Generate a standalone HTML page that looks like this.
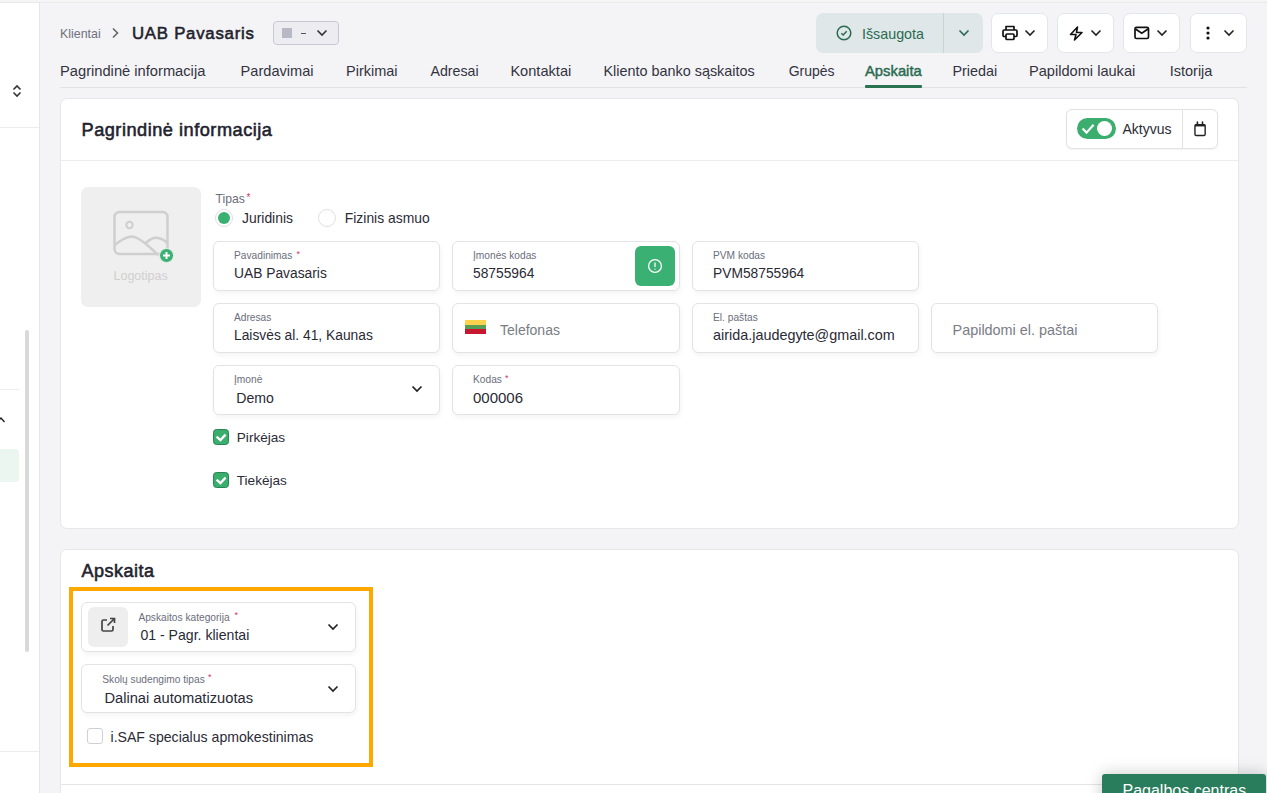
<!DOCTYPE html>
<html><head><meta charset="utf-8"><style>
*{margin:0;padding:0;box-sizing:border-box}
html,body{width:1267px;height:793px;overflow:hidden;background:#f4f4f6;font-family:"Liberation Sans",sans-serif}
.t{position:absolute;white-space:nowrap;line-height:1}
.b{position:absolute}
svg{position:absolute;overflow:visible}
</style></head><body>
<div class="b" style="left:0px;top:0px;width:1267px;height:2px;background:#f5f5f5"></div>
<div class="b" style="left:0px;top:2px;width:1267px;height:1px;background:#e9e9e9"></div>
<div class="b" style="left:0px;top:3px;width:39px;height:790px;background:#fff"></div>
<div class="b" style="left:39px;top:3px;width:1px;height:790px;background:#e6e6ea"></div>
<div class="b" style="left:0px;top:127px;width:39px;height:1px;background:#ececee"></div>
<div class="b" style="left:0px;top:389px;width:19px;height:1px;background:#ececee"></div>
<div class="b" style="left:0px;top:751px;width:39px;height:1px;background:#ececee"></div>
<div class="b" style="left:25px;top:330px;width:4px;height:322px;background:#d9d9d9;border-radius:2px"></div>
<div class="b" style="left:0px;top:449px;width:19px;height:33px;background:#ebf6f0;border-radius:0 4px 4px 0"></div>
<svg style="left:12px;top:84px" width="10" height="14" viewBox="0 0 10 14"><path d="M1.5 5.5 L5 2 L8.5 5.5 M1.5 8.5 L5 12 L8.5 8.5" fill="none" stroke="#333" stroke-width="1.6"/></svg>
<svg style="left:-2px;top:416px" width="8" height="8" viewBox="0 0 8 8"><path d="M0 5 L3 2 L6.5 6" fill="none" stroke="#222" stroke-width="1.4"/></svg>
<div class="t" style="left:60.0px;top:27.50px;font-size:12.4px;color:#6f7180;">Klientai</div>
<svg style="left:111px;top:27px" width="9" height="12" viewBox="0 0 9 12"><path d="M2 1.5 L6.5 6 L2 10.5" fill="none" stroke="#666" stroke-width="1.6"/></svg>
<div class="t" style="left:132.0px;top:26.38px;font-size:16.8px;color:#22222d;-webkit-text-stroke:0.55px #22222d;letter-spacing:0.75px;">UAB Pavasaris</div>
<div class="b" style="left:273px;top:21px;width:66px;height:24px;background:#ededf1;border:1px solid #c9c9d3;border-radius:4px"></div>
<div class="b" style="left:282px;top:28px;width:10px;height:10px;background:#b9b9c6"></div>
<div class="b" style="left:301px;top:32.6px;width:5px;height:1.3px;background:#555"></div>
<svg style="left:316px;top:29px" width="12" height="8" viewBox="0 0 12 8"><path d="M1.5 1.5 L6 6 L10.5 1.5" fill="none" stroke="#333" stroke-width="1.6"/></svg>
<div class="b" style="left:816px;top:13px;width:167px;height:40px;background:#dfe7e8;border-radius:7px"></div>
<div class="b" style="left:943px;top:13px;width:1px;height:40px;background:#c3d8cf"></div>
<svg style="left:836px;top:25px" width="16" height="16" viewBox="0 0 16 16"><circle cx="8" cy="8" r="6.8" fill="none" stroke="#2a6b50" stroke-width="1.5"/><path d="M5.3 8.2 L7.2 10 L10.7 6.3" fill="none" stroke="#2a6b50" stroke-width="1.5"/></svg>
<div class="t" style="left:862.0px;top:27.00px;font-size:14.3px;color:#2a6b50;">Išsaugota</div>
<svg style="left:958px;top:29px" width="12" height="8" viewBox="0 0 12 8"><path d="M1.5 1.5 L6 6 L10.5 1.5" fill="none" stroke="#2a6b50" stroke-width="1.6"/></svg>
<div class="b" style="left:991px;top:13px;width:57px;height:40px;background:#fff;border:1px solid #e4e6ee;border-radius:7px"></div>
<svg style="left:1024px;top:29px" width="12" height="8" viewBox="0 0 12 8"><path d="M1.5 1.5 L6 6 L10.5 1.5" fill="none" stroke="#222" stroke-width="1.6"/></svg>
<div class="b" style="left:1057px;top:13px;width:57px;height:40px;background:#fff;border:1px solid #e4e6ee;border-radius:7px"></div>
<svg style="left:1090px;top:29px" width="12" height="8" viewBox="0 0 12 8"><path d="M1.5 1.5 L6 6 L10.5 1.5" fill="none" stroke="#222" stroke-width="1.6"/></svg>
<div class="b" style="left:1123px;top:13px;width:57px;height:40px;background:#fff;border:1px solid #e4e6ee;border-radius:7px"></div>
<svg style="left:1156px;top:29px" width="12" height="8" viewBox="0 0 12 8"><path d="M1.5 1.5 L6 6 L10.5 1.5" fill="none" stroke="#222" stroke-width="1.6"/></svg>
<div class="b" style="left:1190px;top:13px;width:57px;height:40px;background:#fff;border:1px solid #e4e6ee;border-radius:7px"></div>
<svg style="left:1223px;top:29px" width="12" height="8" viewBox="0 0 12 8"><path d="M1.5 1.5 L6 6 L10.5 1.5" fill="none" stroke="#222" stroke-width="1.6"/></svg>
<svg style="left:1002px;top:25px" width="16" height="16" viewBox="0 0 16 16"><path d="M4 5 V1.5 H12 V5 M4 11.5 H2.2 Q1 11.5 1 10.3 V6.2 Q1 5 2.2 5 H13.8 Q15 5 15 6.2 V10.3 Q15 11.5 13.8 11.5 H12" fill="none" stroke="#111" stroke-width="1.7" stroke-linejoin="round"/><rect x="4" y="9" width="8" height="5.5" rx="1" fill="none" stroke="#111" stroke-width="1.7"/></svg>
<svg style="left:1069px;top:26px" width="15" height="15" viewBox="0 0 15 15"><path d="M8.5 1 L1.5 8.5 H7 L5.5 14 L13 6.5 H7.5 Z" fill="none" stroke="#111" stroke-width="1.6" stroke-linejoin="round"/></svg>
<svg style="left:1134px;top:26px" width="16" height="14" viewBox="0 0 16 14"><rect x="1" y="1.3" width="13.5" height="11.2" rx="1.5" fill="none" stroke="#111" stroke-width="1.7"/><path d="M1.5 3 L7.75 7.3 L14 3" fill="none" stroke="#111" stroke-width="1.7"/></svg>
<svg style="left:1206px;top:26px" width="4" height="14" viewBox="0 0 4 14"><circle cx="2" cy="2" r="1.6" fill="#111"/><circle cx="2" cy="7" r="1.6" fill="#111"/><circle cx="2" cy="12" r="1.6" fill="#111"/></svg>
<div class="t" style="left:60.0px;top:63.86px;font-size:14.7px;color:#33333f;">Pagrindinė informacija</div>
<div class="t" style="left:240.6px;top:63.94px;font-size:14.6px;color:#33333f;">Pardavimai</div>
<div class="t" style="left:346.0px;top:64.03px;font-size:14.5px;color:#33333f;">Pirkimai</div>
<div class="t" style="left:430.5px;top:64.28px;font-size:14.2px;color:#33333f;">Adresai</div>
<div class="t" style="left:510.4px;top:63.94px;font-size:14.6px;color:#33333f;">Kontaktai</div>
<div class="t" style="left:603.5px;top:64.11px;font-size:14.4px;color:#33333f;">Kliento banko sąskaitos</div>
<div class="t" style="left:788.7px;top:64.45px;font-size:14px;color:#33333f;">Grupės</div>
<div class="t" style="left:952.4px;top:64.11px;font-size:14.4px;color:#33333f;">Priedai</div>
<div class="t" style="left:1029.0px;top:63.94px;font-size:14.6px;color:#33333f;">Papildomi laukai</div>
<div class="t" style="left:1169.7px;top:64.03px;font-size:14.5px;color:#33333f;">Istorija</div>
<div class="t" style="left:865.0px;top:63.77px;font-size:14.8px;color:#2a6b50;-webkit-text-stroke:0.45px #2a6b50;">Apskaita</div>
<div class="b" style="left:60px;top:87px;width:1187px;height:1px;background:#e2e2e6"></div>
<div class="b" style="left:865px;top:85px;width:57px;height:3px;background:#2a7350;border-radius:1px"></div>
<div class="b" style="left:60px;top:98px;width:1179px;height:431px;background:#fff;border:1px solid #e7e7eb;border-radius:7px"></div>
<div class="b" style="left:61px;top:160px;width:1177px;height:1px;background:#ececef"></div>
<div class="t" style="left:81.5px;top:120.59px;font-size:18.2px;color:#22222d;-webkit-text-stroke:0.55px #22222d;letter-spacing:0.5px;">Pagrindinė informacija</div>
<div class="b" style="left:1066px;top:109px;width:152px;height:40px;background:#fff;border:1px solid #e2e2e6;border-radius:6px;box-shadow:0 1px 2px rgba(0,0,0,0.05)"></div>
<div class="b" style="left:1182px;top:110px;width:1px;height:38px;background:#e2e2e6"></div>
<div class="b" style="left:1077px;top:118px;width:39px;height:21px;background:#3bae6f;border-radius:11px"></div>
<div class="b" style="left:1097px;top:121px;width:15px;height:15px;background:#fff;border-radius:50%"></div>
<svg style="left:1082px;top:123px" width="12" height="11" viewBox="0 0 12 11"><path d="M0.6 5.6 L4.5 9.6 L11.6 1.8" fill="none" stroke="#fff" stroke-width="2.1"/></svg>
<div class="t" style="left:1122.5px;top:122.35px;font-size:14.0px;color:#2b2b36;">Aktyvus</div>
<svg style="left:1193px;top:121px" width="14" height="16" viewBox="0 0 14 16"><rect x="1.95" y="3.75" width="10.2" height="10.8" rx="1.2" fill="none" stroke="#222" stroke-width="1.4"/><path d="M1.95 4.3 H12.15" stroke="#222" stroke-width="2.3"/><path d="M4.4 1.1 V3.5 M9.5 1.1 V3.5" stroke="#222" stroke-width="1.6" stroke-linecap="round"/></svg>
<div class="b" style="left:81px;top:187px;width:120px;height:120px;background:#efefef;border-radius:7px"></div>
<svg style="left:112px;top:210px" width="58" height="48" viewBox="0 0 58 48"><rect x="2.5" y="2" width="53" height="42" rx="5" fill="none" stroke="#cfcfcf" stroke-width="2.5"/><circle cx="17.5" cy="15" r="3.2" fill="none" stroke="#cfcfcf" stroke-width="2"/><path d="M3 35 Q12 27 20 26.5 Q28 27 46 45 M34 33 Q40 27 46 28 Q52 29 55 33" fill="none" stroke="#cfcfcf" stroke-width="2.5"/></svg>
<div class="b" style="left:159px;top:248px;width:15px;height:15px;background:#3bb073;border-radius:50%;border:1.5px solid #efefef"></div>
<svg style="left:162px;top:251px" width="9" height="9" viewBox="0 0 9 9"><path d="M4.5 1 V8 M1 4.5 H8" stroke="#fff" stroke-width="2"/></svg>
<div class="t" style="left:113.5px;top:270.42px;font-size:12.5px;color:#cfcfcf;">Logotipas</div>
<div class="t" style="left:215.5px;top:192.67px;font-size:12.2px;color:#6b6e7b;">Tipas</div>
<div class="t" style="left:246.5px;top:192.53px;font-size:10px;color:#d6336c;">*</div>
<div class="b" style="left:215px;top:209px;width:18px;height:18px;background:#fff;border:1px solid #e0e0e4;border-radius:50%"></div>
<div class="b" style="left:218px;top:212px;width:12px;height:12px;background:#3bb073;border-radius:50%"></div>
<div class="t" style="left:242.0px;top:212.43px;font-size:13.9px;color:#2b2b36;">Juridinis</div>
<div class="b" style="left:318px;top:209px;width:18px;height:18px;background:#fff;border:1px solid #e0e0e4;border-radius:50%"></div>
<div class="t" style="left:344.8px;top:212.43px;font-size:13.9px;color:#2b2b36;">Fizinis asmuo</div>
<div class="b" style="left:213px;top:241px;width:227px;height:50px;background:#fff;border:1px solid #e3e3e5;border-radius:6px;box-shadow:1px 3px 5px rgba(0,0,0,0.045)"></div>
<div class="t" style="left:234.0px;top:250.77px;font-size:10.2px;color:#6b6e7b;">Pavadinimas</div>
<div class="t" style="left:234.0px;top:266.72px;font-size:13.8px;color:#2a2a35;">UAB Pavasaris</div>
<div class="t" style="left:296.5px;top:250.38px;font-size:9px;color:#d6336c;">*</div>
<div class="b" style="left:452px;top:241px;width:228px;height:50px;background:#fff;border:1px solid #e3e3e5;border-radius:6px;box-shadow:1px 3px 5px rgba(0,0,0,0.045)"></div>
<div class="t" style="left:473.0px;top:250.77px;font-size:10.2px;color:#6b6e7b;">Įmonės kodas</div>
<div class="t" style="left:473.0px;top:266.72px;font-size:13.8px;color:#2a2a35;">58755964</div>
<div class="b" style="left:635px;top:246px;width:40px;height:40px;background:#3bb073;border-radius:6px"></div>
<svg style="left:647px;top:258px" width="16" height="16" viewBox="0 0 16 16"><circle cx="8" cy="8" r="6.4" fill="none" stroke="#fff" stroke-width="1.3"/><path d="M8 4.4 V9" stroke="#fff" stroke-width="1.3"/><circle cx="8" cy="11.1" r="0.7" fill="#fff"/></svg>
<div class="b" style="left:692px;top:241px;width:227px;height:50px;background:#fff;border:1px solid #e3e3e5;border-radius:6px;box-shadow:1px 3px 5px rgba(0,0,0,0.045)"></div>
<div class="t" style="left:713.0px;top:250.77px;font-size:10.2px;color:#6b6e7b;">PVM kodas</div>
<div class="t" style="left:713.0px;top:266.72px;font-size:13.8px;color:#2a2a35;">PVM58755964</div>
<div class="b" style="left:213px;top:303px;width:227px;height:50px;background:#fff;border:1px solid #e3e3e5;border-radius:6px;box-shadow:1px 3px 5px rgba(0,0,0,0.045)"></div>
<div class="t" style="left:234.0px;top:312.77px;font-size:10.2px;color:#6b6e7b;">Adresas</div>
<div class="t" style="left:234.0px;top:328.72px;font-size:13.8px;color:#2a2a35;">Laisvės al. 41, Kaunas</div>
<div class="b" style="left:452px;top:303px;width:228px;height:50px;background:#fff;border:1px solid #e3e3e5;border-radius:6px;box-shadow:1px 3px 5px rgba(0,0,0,0.045)"></div>
<div class="b" style="left:465px;top:320px;width:21px;height:5px;background:#fdd34d"></div>
<div class="b" style="left:465px;top:325px;width:21px;height:4px;background:#5a9e55"></div>
<div class="b" style="left:465px;top:329px;width:21px;height:5px;background:#c9162f"></div>
<div class="t" style="left:500.0px;top:323.15px;font-size:14px;color:#7a7c85;">Telefonas</div>
<div class="b" style="left:692px;top:303px;width:227px;height:50px;background:#fff;border:1px solid #e3e3e5;border-radius:6px;box-shadow:1px 3px 5px rgba(0,0,0,0.045)"></div>
<div class="t" style="left:713.0px;top:312.77px;font-size:10.2px;color:#6b6e7b;">El. paštas</div>
<div class="t" style="left:713.0px;top:328.21px;font-size:14.4px;color:#2a2a35;">airida.jaudegyte@gmail.com</div>
<div class="b" style="left:931px;top:303px;width:227px;height:50px;background:#fff;border:1px solid #e3e3e5;border-radius:6px;box-shadow:1px 3px 5px rgba(0,0,0,0.045)"></div>
<div class="t" style="left:952.6px;top:322.61px;font-size:14.4px;color:#7a7c85;">Papildomi el. paštai</div>
<div class="b" style="left:213px;top:365px;width:227px;height:50px;background:#fff;border:1px solid #e3e3e5;border-radius:6px;box-shadow:1px 3px 5px rgba(0,0,0,0.045)"></div>
<div class="t" style="left:234.0px;top:374.77px;font-size:10.2px;color:#6b6e7b;">Įmonė</div>
<div class="t" style="left:236.3px;top:391.26px;font-size:14.1px;color:#2a2a35;">Demo</div>
<svg style="left:411px;top:385px" width="12" height="8" viewBox="0 0 12 8"><path d="M1.5 1.5 L6 6 L10.5 1.5" fill="none" stroke="#222" stroke-width="1.7"/></svg>
<div class="b" style="left:452px;top:365px;width:228px;height:50px;background:#fff;border:1px solid #e3e3e5;border-radius:6px;box-shadow:1px 3px 5px rgba(0,0,0,0.045)"></div>
<div class="t" style="left:473.0px;top:374.77px;font-size:10.2px;color:#6b6e7b;">Kodas</div>
<div class="t" style="left:473.0px;top:389.70px;font-size:15px;color:#2a2a35;">000006</div>
<div class="t" style="left:505.0px;top:374.38px;font-size:9px;color:#d6336c;">*</div>
<div class="b" style="left:213px;top:429px;width:16px;height:16px;background:#3aae6d;border:1px solid #2a8257;border-radius:3.5px"></div>
<svg style="left:216px;top:433px" width="10" height="8" viewBox="0 0 10 8"><path d="M0.6 3.6 L4.4 7.1 L9.6 1.6" fill="none" stroke="#fff" stroke-width="2.3"/></svg>
<div class="t" style="left:236.8px;top:430.89px;font-size:13.6px;color:#2b2b36;">Pirkėjas</div>
<div class="b" style="left:213px;top:472px;width:16px;height:16px;background:#3aae6d;border:1px solid #2a8257;border-radius:3.5px"></div>
<svg style="left:216px;top:476px" width="10" height="8" viewBox="0 0 10 8"><path d="M0.6 3.6 L4.4 7.1 L9.6 1.6" fill="none" stroke="#fff" stroke-width="2.3"/></svg>
<div class="t" style="left:236.8px;top:473.89px;font-size:13.6px;color:#2b2b36;">Tiekėjas</div>
<div class="b" style="left:60px;top:549px;width:1179px;height:260px;background:#fff;border:1px solid #e7e7eb;border-radius:7px"></div>
<div class="b" style="left:61px;top:784px;width:1177px;height:1px;background:#e5e5e8"></div>
<div class="t" style="left:81.5px;top:562.36px;font-size:18px;color:#22222d;-webkit-text-stroke:0.55px #22222d;letter-spacing:0.5px;">Apskaita</div>
<div class="b" style="left:69px;top:587px;width:304px;height:180px;border:4px solid #ffa800"></div>
<div class="b" style="left:81px;top:602px;width:275px;height:50px;background:#fff;border:1px solid #e3e3e5;border-radius:6px;box-shadow:1px 3px 5px rgba(0,0,0,0.045)"></div>
<div class="b" style="left:88px;top:607px;width:40px;height:40px;background:#eeeeee;border-radius:6px"></div>
<svg style="left:100px;top:617px" width="16" height="16" viewBox="0 0 16 16"><path d="M7 3 H3.5 Q2 3 2 4.5 V12.5 Q2 14 3.5 14 H11.5 Q13 14 13 12.5 V9" fill="none" stroke="#444" stroke-width="1.7"/><path d="M7.5 8.5 L14.5 1.5 M10 1.5 H14.5 V6" fill="none" stroke="#444" stroke-width="1.7"/></svg>
<div class="t" style="left:138.4px;top:612.77px;font-size:10.2px;color:#6b6e7b;">Apskaitos kategorija</div>
<div class="t" style="left:234.5px;top:611.38px;font-size:9px;color:#d6336c;">*</div>
<div class="t" style="left:140.4px;top:628.46px;font-size:14.1px;color:#2a2a35;">01 - Pagr. klientai</div>
<svg style="left:327px;top:623px" width="12" height="8" viewBox="0 0 12 8"><path d="M1.5 1.5 L6 6 L10.5 1.5" fill="none" stroke="#222" stroke-width="1.7"/></svg>
<div class="b" style="left:81px;top:664px;width:275px;height:49px;background:#fff;border:1px solid #e3e3e5;border-radius:6px;box-shadow:1px 3px 5px rgba(0,0,0,0.045)"></div>
<div class="t" style="left:102.3px;top:674.77px;font-size:10.2px;color:#6b6e7b;">Skolų sudengimo tipas</div>
<div class="t" style="left:208.0px;top:673.38px;font-size:9px;color:#d6336c;">*</div>
<div class="t" style="left:104.4px;top:690.56px;font-size:14.7px;color:#2a2a35;">Dalinai automatizuotas</div>
<svg style="left:327px;top:685px" width="12" height="8" viewBox="0 0 12 8"><path d="M1.5 1.5 L6 6 L10.5 1.5" fill="none" stroke="#222" stroke-width="1.7"/></svg>
<div class="b" style="left:87px;top:728px;width:16px;height:16px;background:#fff;border:1px solid #cfcfd6;border-radius:3px"></div>
<div class="t" style="left:110.5px;top:730.06px;font-size:14.1px;color:#2b2b36;">i.SAF specialus apmokestinimas</div>
<div class="b" style="left:1102px;top:774px;width:164px;height:30px;background:#2a7d5c;border-radius:3px 3px 0 0;box-shadow:0 0 16px rgba(0,0,0,0.22)"></div>
<div class="t" style="left:1122.5px;top:782.86px;font-size:16px;color:#fff;">Pagalbos centras</div>
</body></html>
